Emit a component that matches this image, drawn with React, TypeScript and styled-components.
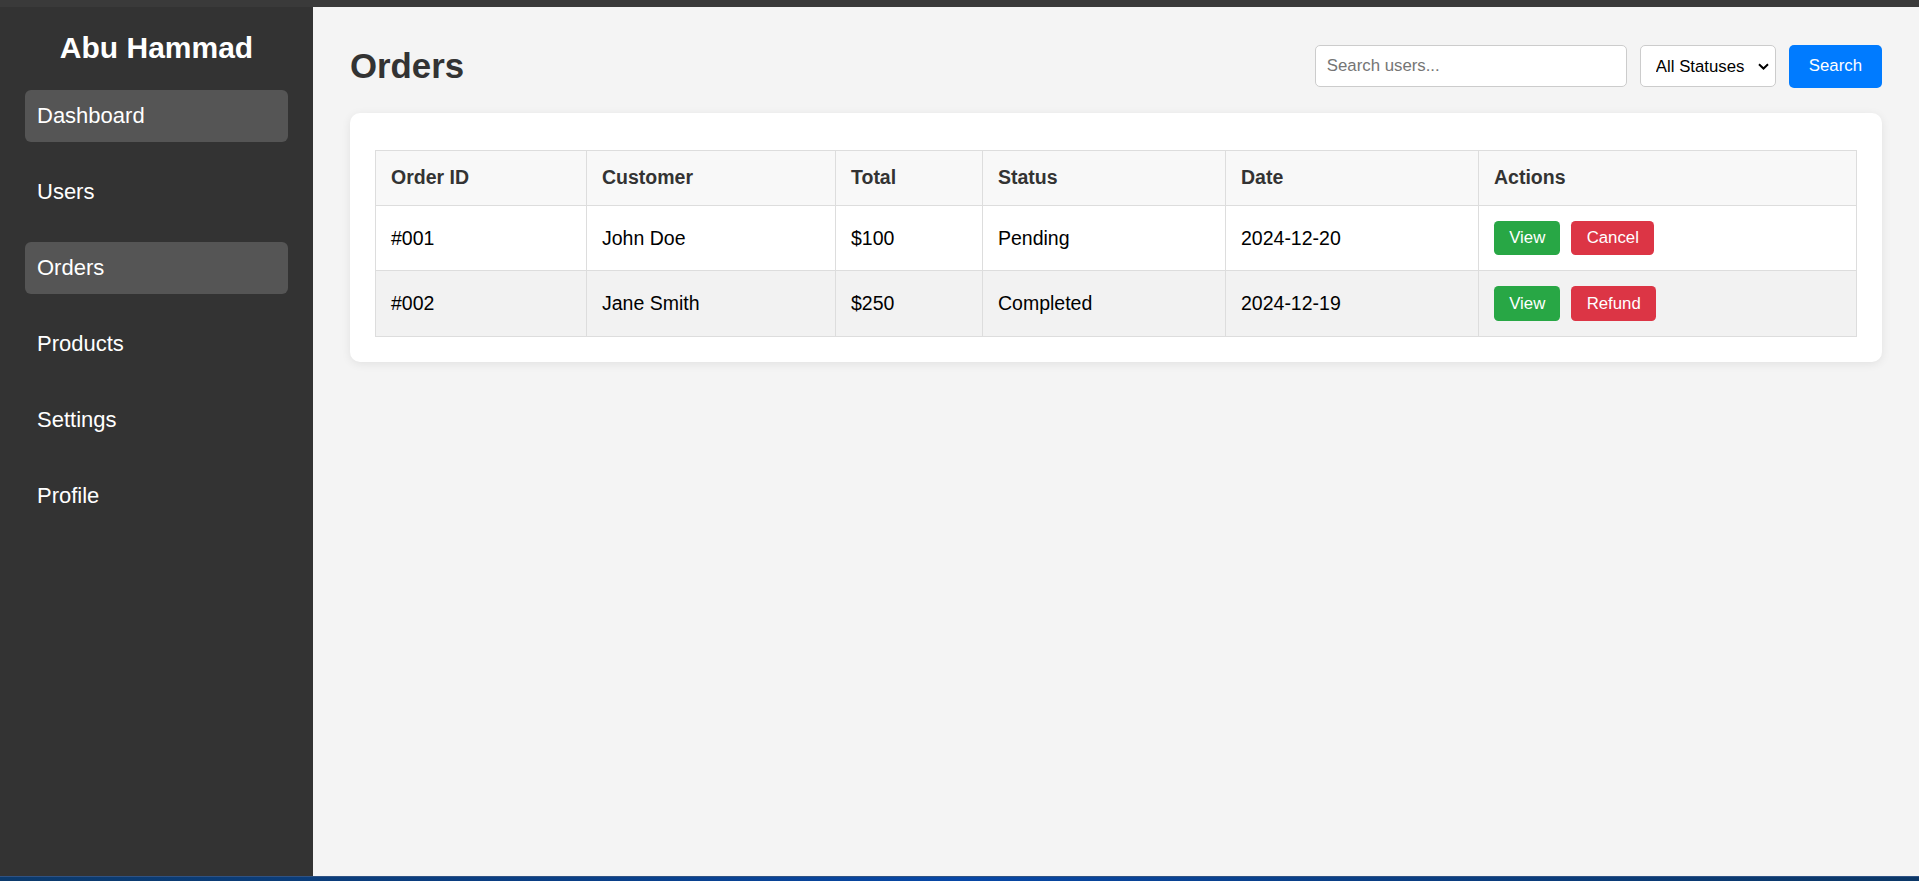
import React from "react";
import styled, { createGlobalStyle } from "styled-components";

const GlobalStyle = createGlobalStyle`
  html, body {
    margin: 0;
    padding: 0;
    height: 100%;
    overflow: hidden;
  }
  body {
    font-family: "Liberation Sans", Arial, Helvetica, sans-serif;
    background: #f4f4f4;
  }
  #root {
    height: 100%;
  }
  * {
    box-sizing: border-box;
  }
`;

const Frame = styled.div`
  display: flex;
  flex-direction: column;
  height: 100vh;
`;

const TopStrip = styled.div`
  height: 7px;
  flex: 0 0 7px;
  background: #3a3a3a;
`;

const Taskbar = styled.div`
  height: 5px;
  flex: 0 0 5px;
  border-top: 1px solid #2f5283;
  background: linear-gradient(
    90deg,
    #0c3a6c 0%,
    #0a3f86 30%,
    #0747a6 50%,
    #0a3f86 70%,
    #0b3767 100%
  );
`;

const Body = styled.div`
  display: flex;
  flex: 1;
  min-height: 0;
`;

const Sidebar = styled.aside`
  width: 313px;
  flex: 0 0 313px;
  background: #333333;
  color: #ffffff;
  padding: 24px 25px;
  display: flex;
  flex-direction: column;
`;

const Brand = styled.h2`
  margin: 0 0 25px;
  font-size: 30px;
  font-weight: bold;
  line-height: normal;
  text-align: center;
  color: #ffffff;
`;

const NavList = styled.ul`
  list-style: none;
  margin: 0;
  padding: 0;
  display: flex;
  flex-direction: column;
  gap: 24.4px;
`;

const NavItem = styled.li<{ $active?: boolean }>`
  padding: 12.8px 12px;
  font-size: 22px;
  line-height: normal;
  color: #ffffff;
  border-radius: 6px;
  background: ${(p) => (p.$active ? "#555555" : "transparent")};
  cursor: pointer;
`;

const Main = styled.main`
  flex: 1;
  min-width: 0;
  padding: 38px 37px 0 37px;
  background: #f4f4f4;
`;

const Header = styled.div`
  display: flex;
  align-items: center;
  justify-content: space-between;
  margin-bottom: 25.5px;
`;

const Title = styled.h1`
  margin: 0;
  font-size: 34.8px;
  font-weight: bold;
  line-height: normal;
  color: #333333;
`;

const Controls = styled.div`
  display: flex;
  align-items: center;
  gap: 13px;
`;

const SearchInput = styled.input`
  width: 312px;
  height: 42px;
  padding: 0 11px;
  font-family: inherit;
  font-size: 16.8px;
  border: 1px solid #cccccc;
  border-radius: 5px;
  background: #ffffff;
  color: #000;
  outline: none;
  &::placeholder {
    color: #757575;
  }
`;

const StatusSelect = styled.select`
  appearance: none;
  -webkit-appearance: none;
  width: 136px;
  height: 42px;
  padding: 0 24px 0 15px;
  font-family: inherit;
  font-size: 16.8px;
  color: #000000;
  border: 1px solid #cccccc;
  border-radius: 5px;
  background-color: #ffffff;
  background-image: url("data:image/svg+xml,%3Csvg xmlns='http://www.w3.org/2000/svg' width='11' height='7' viewBox='0 0 11 7'%3E%3Cpath d='M1 1.2 L5.5 5.5 L10 1.2' fill='none' stroke='%23000' stroke-width='2'/%3E%3C/svg%3E");
  background-repeat: no-repeat;
  background-position: right 6px center;
  outline: none;
`;

const PrimaryButton = styled.button`
  height: 42.7px;
  padding: 0 20px;
  font-family: inherit;
  font-size: 16.8px;
  color: #ffffff;
  background: #007bff;
  border: none;
  border-radius: 5px;
  cursor: pointer;
`;

const Card = styled.section`
  background: #ffffff;
  border-radius: 10px;
  padding: 37px 25px 25px;
  box-shadow: 0 2px 10px rgba(0, 0, 0, 0.08);
`;

const Table = styled.table`
  width: 100%;
  border-collapse: collapse;
  table-layout: fixed;
  font-size: 19.5px;
`;

const HeadCell = styled.th`
  text-align: left;
  padding: 15.3px 15px;
  font-weight: bold;
  color: #333333;
  background: #f8f8f8;
  border: 1px solid #dddddd;
  line-height: normal;
`;

const Row = styled.tr<{ $striped?: boolean }>`
  background: ${(p) => (p.$striped ? "#f2f2f2" : "#ffffff")};
`;

const Cell = styled.td`
  padding: 15px;
  color: #000000;
  border: 1px solid #dddddd;
  line-height: normal;
  vertical-align: middle;
`;

const ActionGroup = styled.div`
  display: flex;
  align-items: center;
  gap: 11px;
`;

const ActionButton = styled.button<{ $variant: "view" | "danger" }>`
  height: 34.7px;
  padding: 0 15.2px;
  font-family: inherit;
  font-size: 16.8px;
  color: #ffffff;
  border: none;
  border-radius: 4.5px;
  background: ${(p) => (p.$variant === "view" ? "#28a745" : "#dc3545")};
  cursor: pointer;
`;

const navItems = [
  { label: "Dashboard", active: true },
  { label: "Users", active: false },
  { label: "Orders", active: true },
  { label: "Products", active: false },
  { label: "Settings", active: false },
  { label: "Profile", active: false },
];

const orders = [
  { id: "#001", customer: "John Doe", total: "$100", status: "Pending", date: "2024-12-20", action: "Cancel" },
  { id: "#002", customer: "Jane Smith", total: "$250", status: "Completed", date: "2024-12-19", action: "Refund" },
];

const columnWidths = [211, 249, 147, 243, 253];

export default function App() {
  return (
    <>
      <GlobalStyle />
      <Frame>
        <TopStrip />
        <Body>
          <Sidebar>
            <Brand>Abu Hammad</Brand>
            <NavList>
              {navItems.map((item) => (
                <NavItem key={item.label} $active={item.active}>
                  {item.label}
                </NavItem>
              ))}
            </NavList>
          </Sidebar>
          <Main>
            <Header>
              <Title>Orders</Title>
              <Controls>
                <SearchInput placeholder="Search users..." />
                <StatusSelect defaultValue="all">
                  <option value="all">All Statuses</option>
                  <option value="pending">Pending</option>
                  <option value="completed">Completed</option>
                </StatusSelect>
                <PrimaryButton>Search</PrimaryButton>
              </Controls>
            </Header>
            <Card>
              <Table>
                <colgroup>
                  {columnWidths.map((w, i) => (
                    <col key={i} style={{ width: w }} />
                  ))}
                  <col />
                </colgroup>
                <thead>
                  <tr>
                    <HeadCell>Order ID</HeadCell>
                    <HeadCell>Customer</HeadCell>
                    <HeadCell>Total</HeadCell>
                    <HeadCell>Status</HeadCell>
                    <HeadCell>Date</HeadCell>
                    <HeadCell>Actions</HeadCell>
                  </tr>
                </thead>
                <tbody>
                  {orders.map((o, i) => (
                    <Row key={o.id} $striped={i % 2 === 1}>
                      <Cell>{o.id}</Cell>
                      <Cell>{o.customer}</Cell>
                      <Cell>{o.total}</Cell>
                      <Cell>{o.status}</Cell>
                      <Cell>{o.date}</Cell>
                      <Cell>
                        <ActionGroup>
                          <ActionButton $variant="view">View</ActionButton>
                          <ActionButton $variant="danger">{o.action}</ActionButton>
                        </ActionGroup>
                      </Cell>
                    </Row>
                  ))}
                </tbody>
              </Table>
            </Card>
          </Main>
        </Body>
        <Taskbar />
      </Frame>
    </>
  );
}
